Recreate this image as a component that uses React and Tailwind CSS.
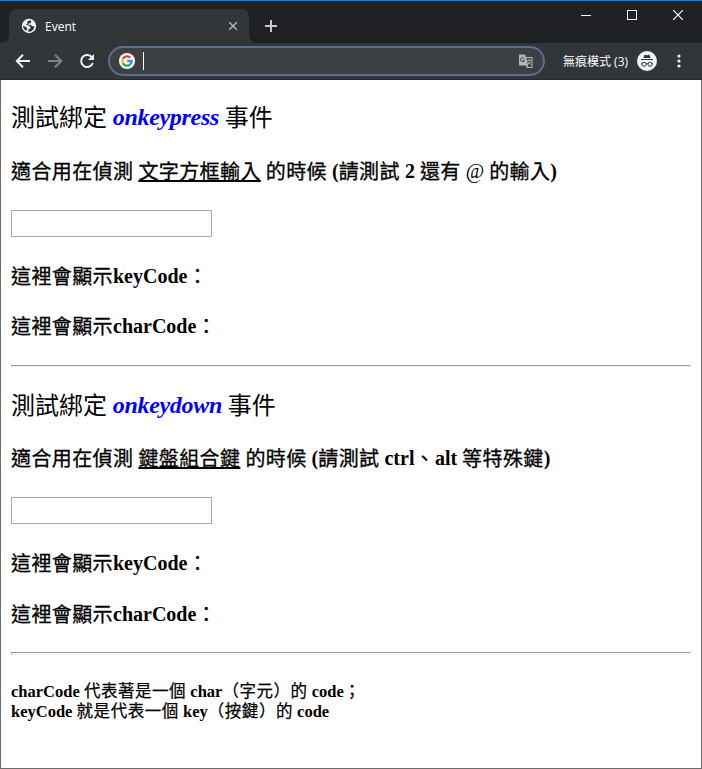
import React from "react";

const C = ({ children, className = "" }) => (
  <span className={`font-normal ${className}`}>{children}</span>
);

const Title = ({ name }) => (
  <h2 className="flex h-[40px] items-center whitespace-pre text-[24px]">
    <C className="pt-[1px]">測試綁定</C>
    <span className="font-bold italic text-[#0000ff] tracking-[-0.3px]"> {name} </span>
    <C className="pt-[1px]">事件</C>
  </h2>
);

const Line = ({ children, className = "" }) => (
  <h3 className={`h-[30px] whitespace-pre text-[20px] font-bold leading-[30px] ${className}`}>
    {children}
  </h3>
);

const K = ({ children }) => (
  <C className="align-[-1px] tracking-[0.4px] [-webkit-text-stroke:0.3px_black]">{children}</C>
);
const S = ({ children }) => (
  <C className="tracking-[0.55px] [-webkit-text-stroke:0.25px_black]">{children}</C>
);

const Rule = ({ className }) => (
  <div className={`w-[680px] border border-[#9a9a9a] border-r-[#eeeeee] border-b-[#eeeeee] ${className}`} />
);

const Field = () => (
  <input className="block h-[27px] w-[201px] border border-[#a9a9a9] bg-white px-1 outline-none" />
);

function Chrome() {
  return (
    <header className="bg-[#202124] font-['Open_Sans','Noto_Sans_CJK_TC',sans-serif] text-white">
      <div className="flex h-[43px] border-t border-[#1a82d8]">
        <div className="relative ml-[9px] mt-[8px] flex h-[34px] w-[240px] items-center rounded-t-[8px] bg-[#323639] pl-[12px] pr-[10px]">
          <svg className="absolute -left-2 bottom-0" width="8" height="8"><path d="M8 0v8H0A8 8 0 0 0 8 0" fill="#323639" /></svg>
          <svg className="absolute -right-2 bottom-0" width="8" height="8"><path d="M0 0v8h8A8 8 0 0 1 0 0" fill="#323639" /></svg>
          <svg width="16" height="16" viewBox="0 0 16 16">
            <circle cx="8" cy="8" r="7.2" fill="#f1f3f4" />
            <path d="M8.8 2.2 5.8 3.7l1 1.4-1.9 1.7 2.8.6 2 1.8-.8 1.5-1.4.6-.2 2.4c3.5 0 5.8-2.4 6.1-5.3l-2.5-.3-1-1.4-2.5.2.3-1.3 2.2-.7.3-1.6zM2 7.7l2.5 1.1 1.7 1.5-.8 2.6C3.4 12 2.1 10 2 7.7" fill="#323639" />
          </svg>
          <span className="ml-[8px] pt-[2px] text-[12px] leading-none">Event</span>
          <svg className="ml-auto" width="12" height="12" viewBox="0 0 12 12" stroke="#b0b3b6" strokeWidth="1.5"><path d="m2.2 2.2 7.6 7.6m0-7.6L2.2 9.8" /></svg>
        </div>
        <svg className="ml-[16px] mt-[19px]" width="12" height="12" stroke="#c8cacc" strokeWidth="2"><path d="M6 0v12M0 6h12" /></svg>
        <div className="ml-auto mr-[19px] mt-[9px] flex gap-[36px]">
          <svg width="10" height="10" stroke="white"><path d="M0 5.5h10" /></svg>
          <svg width="10" height="10" stroke="white" fill="none"><path d="M.5.5h9v9h-9z" /></svg>
          <svg width="10" height="10" stroke="white" strokeWidth="1.2"><path d="m0 0 10 10M10 0 0 10" /></svg>
        </div>
      </div>
      <div className="flex h-[37px] items-center border-b border-[#292b2e] bg-[#323639] pl-[15px] pr-[21px]">
        <svg width="16" height="16" viewBox="0 0 16 16" fill="none" stroke="#f1f3f4" strokeWidth="2"><path d="M15 8H2.4M8 1.8 1.8 8 8 14.2" /></svg>
        <svg className="ml-[16px]" width="16" height="16" viewBox="0 0 16 16" fill="none" stroke="#808487" strokeWidth="2"><path d="M1 8h12.6M8 1.8 14.2 8 8 14.2" /></svg>
        <svg className="ml-[16px]" width="16" height="16" viewBox="0 0 16 16" fill="none" stroke="#f1f3f4" strokeWidth="2"><path d="M13.8 10A6 6 0 1 1 12.4 3.8L14 5.4" /><path d="M15 1v6H9z" fill="#f1f3f4" stroke="none" /></svg>
        <div className="ml-[13px] flex h-[30px] w-[437px] items-center rounded-full border-2 border-[#5a6f94] bg-[#3c4043] pl-[9px] pr-[10px]">
          <svg width="16" height="16" viewBox="0 0 48 48">
            <circle cx="24" cy="24" r="24" fill="white" />
            <g fill="none" strokeWidth="7">
              <path d="M34 14.2A14 14 0 0 0 11.5 17.7" stroke="#ea4335" />
              <path d="M11.5 17.7a14 14 0 0 0 0 12.6" stroke="#fbbc05" />
              <path d="M11.5 30.3A14 14 0 0 0 33.2 34.5" stroke="#34a853" />
              <path d="M33.2 34.5A14 14 0 0 0 38 24H24.5" stroke="#4285f4" />
            </g>
          </svg>
          <div className="ml-[8px] h-[18px] w-px bg-white" />
          <svg className="ml-auto" width="14" height="15" viewBox="0 0 14 15">
            <path d="M0 .5h6l.8 2.5h6.7v11H7.8L7 11.5H0z" fill="#b4b7b9" />
            <path d="M7.2 4h5.3v9H8.3l1-1.5z" fill="#3c4043" />
            <path d="M5.2 4.6A2 2 0 1 0 5.4 6.2H3.8" fill="none" stroke="#3c4043" />
            <path d="M8 6.2h4M10 5v1m1.5.3c-.3 2-1.5 3.3-3 4.2M8.8 7.5l3 3.2" fill="none" stroke="#b4b7b9" strokeWidth=".9" />
          </svg>
        </div>
        <span className="ml-[18px] whitespace-nowrap pt-[1px] text-[12px] leading-none">無痕模式 (3)</span>
        <svg className="ml-auto" width="20" height="20" viewBox="0 0 20 20">
          <circle cx="10" cy="10" r="10" fill="#f1f3f4" />
          <g fill="#323639"><path d="m6.5 7 1-3.2L10 4.3l2.5-.5 1 3.2zM4 8h12v1.1H4z" /></g>
          <g fill="none" stroke="#323639" strokeWidth="1"><circle cx="7" cy="13.3" r="2" /><circle cx="13" cy="13.3" r="2" /><path d="M9 13q1-.6 2 0M4 12.8h1m10 0h1" /></g>
        </svg>
        <svg className="ml-[20px]" width="4" height="14" fill="#f1f3f4"><circle cx="2" cy="2" r="1.6" /><circle cx="2" cy="7" r="1.6" /><circle cx="2" cy="12" r="1.6" /></svg>
      </div>
    </header>
  );
}

export default function App() {
  return (
    <div className="h-[769px] w-[702px] overflow-hidden bg-white">
      <Chrome />
      <main className="h-[689px] border border-t-0 border-[#6b6b6b] pl-[10px] pt-[17px] font-['Liberation_Serif','Noto_Sans_CJK_TC',serif] text-black">
        <Title name="onkeypress" />
        <Line className="mt-[19px]">
          <K>適合用在偵測</K> <K><span className="underline decoration-2 underline-offset-[1px] [text-decoration-skip-ink:none]">文字方框輸入</span></K> <K>的時候</K> (<K>請測試</K> 2 <K>還有</K> <C>@</C> <K>的輸入</K>)
        </Line>
        <div className="mt-[24px]"><Field /></div>
        <Line className="mt-[24px]"><K>這裡會顯示</K>keyCode<K>：</K></Line>
        <Line className="mt-[20px]"><K>這裡會顯示</K>charCode<K>：</K></Line>
        <div className="mt-[24px]"><Rule className="h-[2px]" /></div>
        <div className="mt-[18px]"><Title name="onkeydown" /></div>
        <Line className="mt-[18px]">
          <K>適合用在偵測</K> <K><span className="underline decoration-2 underline-offset-[1px] [text-decoration-skip-ink:none]">鍵盤組合鍵</span></K> <K>的時候</K> (<K>請測試</K> ctrl<K>、</K>alt <K>等特殊鍵</K>)
        </Line>
        <div className="mt-[24px]"><Field /></div>
        <Line className="mt-[24px]"><K>這裡會顯示</K>keyCode<K>：</K></Line>
        <Line className="mt-[21px]"><K>這裡會顯示</K>charCode<K>：</K></Line>
        <div className="mt-[23px]"><Rule className="h-[3px]" /></div>
        <p className="mt-[27px] text-[16.5px] font-bold leading-[20px]">
          charCode <S>代表著是一個</S> char<S>（字元）的</S> code<S>；</S><br />
          keyCode <S>就是代表一個</S> key<S>（按鍵）的</S> code
        </p>
      </main>
    </div>
  );
}
